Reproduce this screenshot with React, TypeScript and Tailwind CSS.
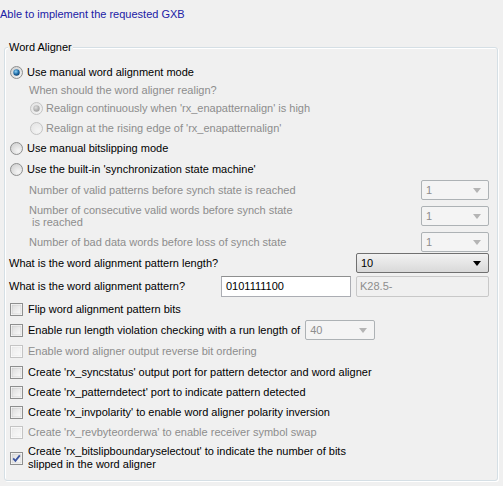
import React from 'react'

const font = { fontFamily: '"Liberation Sans", Arial, sans-serif' }

function Radio({ checked = false, disabled = false }: { checked?: boolean; disabled?: boolean }) {
  const ring = disabled ? '#c3c3c3' : '#8e8f8f'
  const k = disabled ? 'd' : 'e'
  return (
    <svg width="13" height="13" viewBox="0 0 13 13" className="shrink-0">
      <defs>
        <radialGradient id={`rf${k}`} cx="0.65" cy="0.7" r="0.7">
          <stop offset="0" stopColor={disabled ? '#f4f4f4' : '#f6f6f6'} />
          <stop offset="1" stopColor={disabled ? '#e6e6e6' : '#d4d4d4'} />
        </radialGradient>
        <radialGradient id={`rd${k}`} cx="0.4" cy="0.35" r="0.7">
          <stop offset="0" stopColor={disabled ? '#e0e0e0' : '#8fd3f7'} />
          <stop offset="0.6" stopColor={disabled ? '#b3b3b3' : '#1d6aa5'} />
          <stop offset="1" stopColor={disabled ? '#a0a0a0' : '#0f3c66'} />
        </radialGradient>
      </defs>
      <circle cx="6.5" cy="6.5" r="6" fill={`url(#rf${k})`} stroke={ring} />
      {checked && <circle cx="6.5" cy="6.5" r="3.2" fill={`url(#rd${k})`} />}
    </svg>
  )
}

function Check({ checked = false, disabled = false }: { checked?: boolean; disabled?: boolean }) {
  const k = disabled ? 'd' : 'e'
  return (
    <svg width="13" height="13" viewBox="0 0 13 13" className="shrink-0">
      <defs>
        <linearGradient id={`cg${k}`} x1="0" y1="0" x2="1" y2="1">
          <stop offset="0" stopColor={disabled ? '#ececec' : '#dcdcdc'} />
          <stop offset="1" stopColor={disabled ? '#fafafa' : '#fbfbfb'} />
        </linearGradient>
      </defs>
      <rect x="0.5" y="0.5" width="12" height="12" fill="#fff" stroke={disabled ? '#c4c4c4' : '#8e8f8f'} />
      <rect x="2" y="2" width="9" height="9" fill={`url(#cg${k})`} stroke={disabled ? '#e4e4e4' : '#c6c6c6'} strokeWidth="0.6" />
      {checked && <path d="M3.2 6.4 L5.4 8.8 L9.8 3.4" fill="none" stroke="#3c55a0" strokeWidth="1.8" />}
    </svg>
  )
}

function Combo({ value, disabled = false, className = '' }: { value: string; disabled?: boolean; className?: string }) {
  if (disabled) {
    return (
      <div className={`flex h-[20px] items-center justify-between rounded-[2px] border border-[#adb2b5] bg-[#f4f4f4] pl-[4px] pr-[7px] text-[#8d8d8d] ${className}`}>
        <span>{value}</span>
        <svg width="8" height="5" viewBox="0 0 8 5"><path d="M0 0 H8 L4 5 Z" fill="#b4b4b4" /></svg>
      </div>
    )
  }
  return (
    <div className={`flex h-[20px] items-center justify-between rounded-[2px] border border-[#707070] bg-gradient-to-b from-[#f2f2f2] to-[#d9d9d9] pl-[4px] pr-[7px] text-black ${className}`}>
      <span>{value}</span>
      <svg width="8" height="5" viewBox="0 0 8 5"><path d="M0 0 H8 L4 5 Z" fill="#000" /></svg>
    </div>
  )
}

export default function App() {
  const gray = 'text-[#8d8d8d]'
  return (
    <div className="h-[486px] w-[503px] overflow-hidden bg-[#f0f0f0] text-[11px] leading-[13px] text-black" style={font}>
      <div className="flex h-[28px] items-center text-[#2020a6]">Able to implement the requested GXB</div>

      <div className="h-[19px]" />

      <div className="relative ml-[4px] w-[494px] rounded-[3px] border border-[#d5dfe5] pb-[6px] pl-[4px] pr-[8px] pt-[14px] shadow-[inset_1px_1px_0_#ffffff,1px_1px_0_#ffffff]">
        <span className="absolute left-[3px] top-[-7px] bg-[#f0f0f0] px-[1px]">Word Aligner</span>

        <div className="flex h-[20px] items-center gap-[4px] pl-[1px]">
          <Radio checked />
          <span>Use manual word alignment mode</span>
        </div>
        <div className={`flex h-[16px] items-center pl-[20px] ${gray}`}>When should the word aligner realign?</div>
        <div className={`flex h-[20px] items-center gap-[3px] pl-[21px] ${gray}`}>
          <Radio checked disabled />
          <span>Realign continuously when 'rx_enapatternalign' is high</span>
        </div>
        <div className={`flex h-[20px] items-center gap-[3px] pl-[21px] ${gray}`}>
          <Radio disabled />
          <span>Realign at the rising edge of 'rx_enapatternalign'</span>
        </div>
        <div className="flex h-[20px] items-center gap-[4px] pl-[1px]">
          <Radio />
          <span>Use manual bitslipping mode</span>
        </div>
        <div className="flex h-[22px] items-center gap-[4px] pl-[1px]">
          <Radio />
          <span>Use the built-in 'synchronization state machine'</span>
        </div>

        <div className={`flex h-[20px] items-center justify-between pl-[20px] ${gray}`}>
          <span>Number of valid patterns before synch state is reached</span>
          <Combo value="1" disabled className="w-[68px]" />
        </div>
        <div className={`flex h-[32px] items-center justify-between pl-[20px] ${gray}`}>
          <span className="leading-[12px]">
            Number of consecutive valid words before synch state
            <br />
            &nbsp;is reached
          </span>
          <Combo value="1" disabled className="w-[68px]" />
        </div>
        <div className={`flex h-[20px] items-center justify-between pl-[20px] ${gray}`}>
          <span>Number of bad data words before loss of synch state</span>
          <Combo value="1" disabled className="w-[68px]" />
        </div>

        <div className="flex h-[22px] items-center justify-between">
          <span>What is the word alignment pattern length?</span>
          <Combo value="10" className="w-[133px]" />
        </div>
        <div className="flex h-[24px] items-center">
          <span className="w-[212px]">What is the word alignment pattern?</span>
          <div className="flex h-[21px] w-[130px] items-center border border-[#abadb3] border-t-[#8e8f8f] bg-white pl-[4px]">0101111100</div>
          <div className="ml-[5px] flex h-[21px] w-[133px] items-center rounded-[2px] border border-[#c8c8c8] bg-[#f0f0f0] pl-[3px] text-[#8d8d8d]">K28.5-</div>
        </div>

        <div className="flex h-[22px] items-center gap-[5px] pl-[1px]">
          <Check />
          <span>Flip word alignment pattern bits</span>
        </div>
        <div className="flex h-[20px] items-center gap-[5px] pl-[1px]">
          <Check />
          <span>Enable run length violation checking with a run length of</span>
          <Combo value="40" disabled className="w-[70px]" />
        </div>
        <div className={`flex h-[22px] items-center gap-[5px] pl-[1px] ${gray}`}>
          <Check disabled />
          <span>Enable word aligner output reverse bit ordering</span>
        </div>
        <div className="flex h-[20px] items-center gap-[5px] pl-[1px]">
          <Check />
          <span>Create 'rx_syncstatus' output port for pattern detector and word aligner</span>
        </div>
        <div className="flex h-[20px] items-center gap-[5px] pl-[1px]">
          <Check />
          <span>Create 'rx_patterndetect' port to indicate pattern detected</span>
        </div>
        <div className="flex h-[20px] items-center gap-[5px] pl-[1px]">
          <Check />
          <span>Create 'rx_invpolarity' to enable word aligner polarity inversion</span>
        </div>
        <div className={`flex h-[20px] items-center gap-[5px] pl-[1px] ${gray}`}>
          <Check disabled />
          <span>Create 'rx_revbyteorderwa' to enable receiver symbol swap</span>
        </div>
        <div className="flex h-[32px] items-center gap-[5px] pl-[1px]">
          <Check checked />
          <span className="leading-[13px]">
            Create 'rx_bitslipboundaryselectout' to indicate the number of bits
            <br />
            slipped in the word aligner
          </span>
        </div>
      </div>
    </div>
  )
}
